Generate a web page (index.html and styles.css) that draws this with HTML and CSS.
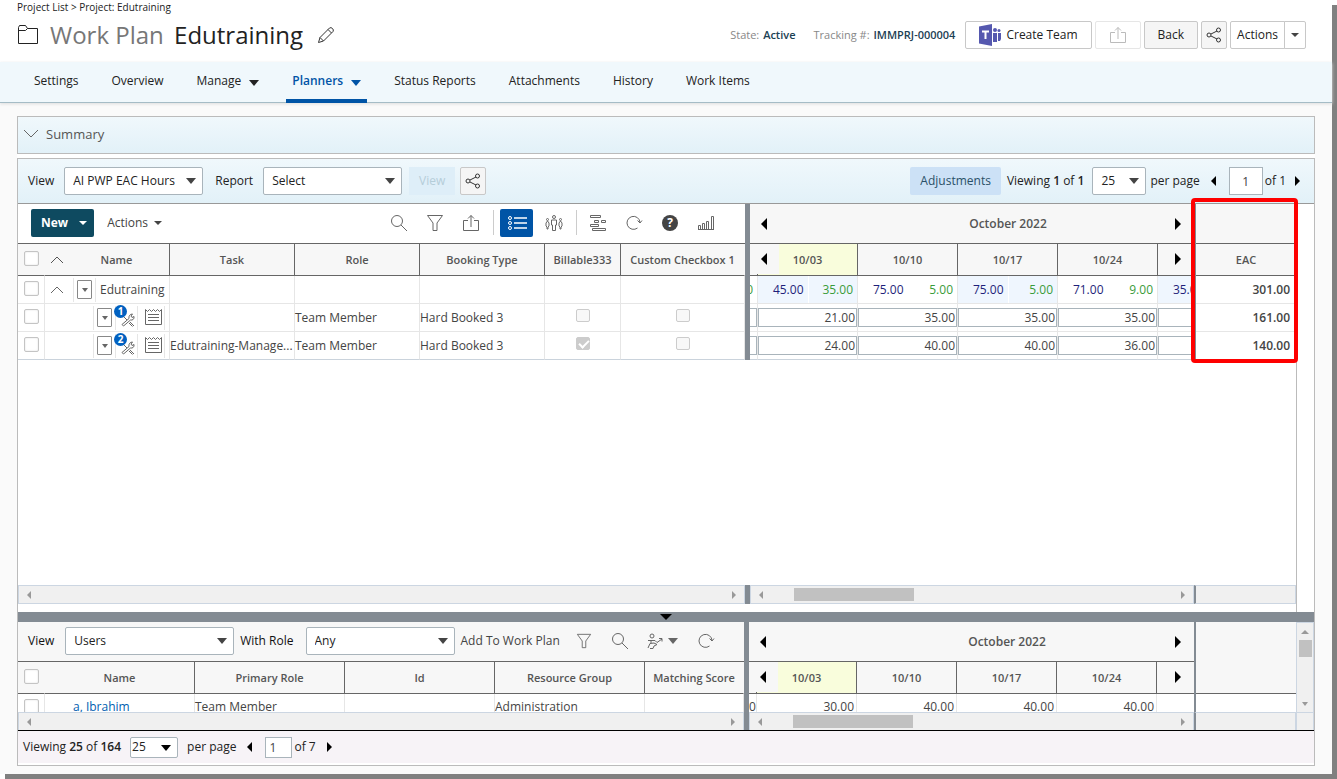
FILE: index.html
```html
<!DOCTYPE html>
<html lang="en">
<head>
  <meta charset="UTF-8">
  <title>Work Plan - Edutraining</title>
  <link rel="stylesheet" href="styles.css">
</head>
<body>
  <!-- shared icons -->
  <svg class="sprite" aria-hidden="true">
    <symbol id="i-share" viewBox="0 0 16 16"><g fill="none" stroke="currentColor"><circle cx="3" cy="8" r="2"/><circle cx="12.500" cy="3" r="2"/><circle cx="12.500" cy="13" r="2"/><path d="M5 7l6-3M5 9l6 3"/></g></symbol>
    <symbol id="i-export" viewBox="0 0 18 18"><path d="M6 6.500H1.500v10h15v-10H12M9 13V1.500M6 4.500l3-3 3 3" fill="none" stroke="currentColor"/></symbol>
    <symbol id="i-search" viewBox="0 0 18 18"><path d="M11 11l6 6M1.500 7a5.500 5.500 0 1 0 11 0a5.500 5.500 0 1 0-11 0z" fill="none" stroke="currentColor"/></symbol>
    <symbol id="i-filter" viewBox="0 0 18 18"><path d="M1.500 1.500h15L11 9v7.500H7V9z" fill="none" stroke="currentColor"/></symbol>
    <symbol id="i-refresh" viewBox="0 0 18 18"><path d="M12.500 14A6.500 6.500 0 1 1 15 8.500M12.500 6.500l2.500 2.500 2-2.500" fill="none" stroke="currentColor"/></symbol>
    <symbol id="i-up" viewBox="0 0 14 8"><path d="M1 7l6-6 6 6" fill="none" stroke="currentColor"/></symbol>
    <symbol id="i-tools" viewBox="0 0 14 14"><g fill="none" stroke="currentColor"><path d="M1 11.500L8 5.500c-.5-2.500 1-4.500 3.500-4.500L10 3l1 1.500 2-1c.5 2.500-1.500 4-3.500 3.500L2.500 13z"/><path d="M2 3l4 4M9 9l4 4M8 10l3.500 3.500"/></g></symbol>
    <symbol id="i-notes" viewBox="0 0 17 17"><path d="M.500 1.500v15h16v-15l-2 2-2-2-2 2-2-2-2 2-2-2-2 2zM3 6.500h11M3 9.500h11M3 12.500h11" fill="none" stroke="currentColor"/></symbol>
  </svg>

  <div class="page">
    <header class="header">
      <div class="breadcrumb"><a href="#">Project List</a> &gt; <a href="#">Project: Edutraining</a></div>
      <div class="title-row">
        <svg class="folder" width="22" height="21" viewBox="0 0 22 21"><path d="M1.500 19.500v-16l1-2h6l2 3h10v15zM1.500 6.500h7l2-2" fill="none" stroke="#222"/></svg>
        <h1><span class="muted">Work Plan</span> Edutraining</h1>
        <button class="plain" aria-label="Edit"><svg width="18" height="18" viewBox="0 0 18 18"><path d="M1.500 16.500l1.500-5L12.500 2q1.500-1 3 .500t.500 3L6.500 15zM3 11.500l3.500 3.500M11 3.500l3.500 3.500" fill="none" stroke="#333"/></svg></button>
        <div class="header-side">
          <span class="fact">State: <b>Active</b></span>
          <span class="fact">Tracking #: <b>IMMPRJ-000004</b></span>
          <button class="btn create-team">
            <svg width="22" height="22" viewBox="0 0 22 22"><path d="M0 2.500L13 0v22L0 19.500z" fill="#5558af"/><path d="M3 6.500h7v2H7.500V15h-2V8.500H3z" fill="#fff"/><circle cx="16" cy="6" r="2" fill="#5558af"/><circle cx="20" cy="6.500" r="1.500" fill="#5558af"/><path d="M14 9h4v9h-4zM19 9h3v6l-1 2h-2z" fill="#5558af"/></svg>
            Create Team
          </button>
          <button class="btn export-btn" disabled aria-label="Export"><svg width="18" height="18"><use href="#i-export"/></svg></button>
          <button class="btn soft">Back</button>
          <button class="btn soft share-btn" aria-label="Share"><svg width="16" height="16"><use href="#i-share"/></svg></button>
          <div class="split-btn">
            <button class="btn">Actions</button><button class="btn" aria-label="More actions"><i class="tri down small"></i></button>
          </div>
        </div>
      </div>
    </header>

    <nav class="tabs">
      <a href="#">Settings</a>
      <a href="#">Overview</a>
      <a href="#">Manage <i class="tri down"></i></a>
      <a href="#" class="active">Planners <i class="tri down"></i></a>
      <a href="#">Status Reports</a>
      <a href="#">Attachments</a>
      <a href="#">History</a>
      <a href="#">Work Items</a>
    </nav>

    <main class="content">
      <button class="summary">
        <svg width="16" height="10" viewBox="0 0 16 10"><path d="M1 1l7 7 7-7" fill="none" stroke="#666"/></svg>
        Summary
      </button>

      <section class="planner">
        <div class="view-bar">
          <label for="view">View</label>
          <span class="select w140"><select id="view"><option>AI PWP EAC Hours</option></select></span>
          <label for="report" class="report-label">Report</label>
          <span class="select w140"><select id="report"><option>Select</option></select></span>
          <button class="view-btn" disabled>View</button>
          <button class="btn soft share-btn" aria-label="Share view"><svg width="16" height="16"><use href="#i-share"/></svg></button>
          <div class="pager">
            <button class="adjust">Adjustments</button>
            <span>Viewing <b>1</b> of <b>1</b></span>
            <span class="select w54"><select aria-label="Rows per page"><option>25</option></select></span>
            <span>per page</span>
            <button class="plain" aria-label="Previous page"><i class="tri left small"></i></button>
            <input class="page-no" value="1" aria-label="Page">
            <span>of 1</span>
            <button class="plain" aria-label="Next page"><i class="tri right small"></i></button>
          </div>
        </div>

        <div class="upper">
          <div class="panes">
            <div class="pane-left">
              <div class="grid-tools">
                <button class="new-btn">New <i class="tri down small"></i></button>
                <button class="plain actions-btn">Actions <i class="tri down small"></i></button>
                <div class="icon-row">
                  <button class="icon-btn" aria-label="Search"><svg width="18" height="18"><use href="#i-search"/></svg></button>
                  <button class="icon-btn" aria-label="Filter"><svg width="18" height="18"><use href="#i-filter"/></svg></button>
                  <button class="icon-btn" aria-label="Export"><svg width="18" height="18"><use href="#i-export"/></svg></button>
                  <span class="sep"></span>
                  <button class="icon-btn on" aria-label="List view"><svg width="20" height="16" viewBox="0 0 20 16" fill="none" stroke="#fff"><circle cx="3" cy="3" r="1.500"/><circle cx="3" cy="8" r="1.500"/><circle cx="3" cy="13" r="1.500"/><path d="M7 3h13M7 8h13M7 13h13" stroke-width="1.500"/></svg></button>
                  <button class="icon-btn" aria-label="People view"><svg width="18" height="18" viewBox="0 0 18 18" fill="none" stroke="currentColor"><circle cx="9" cy="3" r="1.500"/><path d="M6.500 6h5v5h-1v5.500h-3V11h-1zM2.500 7l1.500 2v3l-1 1v2h-1v-2L1 12V9zM15.500 7L17 9v3l-1 1v2h-1v-2l-1-1V9z"/><circle cx="2.500" cy="5.500" r="1"/><circle cx="15.500" cy="5.500" r="1"/></svg></button>
                  <span class="sep"></span>
                  <button class="icon-btn" aria-label="Gantt"><svg width="18" height="18" viewBox="0 0 18 18" fill="none" stroke="currentColor"><path d="M1.500 1.500h10v2h-10zM5.500 6.500h4v2h-4zM12.500 6.500h4v2h-4zM1.500 10.500h8v2h-8zM3.500 14.500h13v2h-13z"/></svg></button>
                  <button class="icon-btn" aria-label="Refresh"><svg width="18" height="18"><use href="#i-refresh"/></svg></button>
                  <button class="icon-btn help" aria-label="Help"><span>?</span></button>
                  <button class="icon-btn" aria-label="Chart"><svg width="18" height="18" viewBox="0 0 18 18" fill="none" stroke="currentColor"><path d="M1.500 11.500h2v4h-2zM5.500 9.500h2v6h-2zM9.500 7.500h2v8h-2zM14.500 2.500h2v13h-2zM1 15.500h16"/></svg></button>
                </div>
              </div>
              <table class="grid plan-grid">
                <colgroup><col class="c-check"><col class="c-name"><col class="c-wide"><col class="c-wide"><col class="c-wide"><col class="c-bill"><col></colgroup>
                <thead>
                  <tr>
                    <th class="no-line"><input type="checkbox" class="pick" aria-label="Select all"></th>
                    <th><div class="name-head"><button class="plain" aria-label="Collapse all"><svg width="14" height="8"><use href="#i-up"/></svg></button><span>Name</span></div></th>
                    <th>Task</th><th>Role</th><th>Booking Type</th><th>Billable333</th><th class="no-line">Custom Checkbox 1</th>
                  </tr>
                </thead>
                <tbody>
                  <tr>
                    <td><input type="checkbox" class="pick" aria-label="Select Edutraining"></td>
                    <td><div class="name-cell">
                      <span class="slot fold"><button class="plain" aria-label="Collapse"><svg width="14" height="8"><use href="#i-up"/></svg></button></span>
                      <span class="slot"><button class="drop" aria-label="Row menu"><i class="tri down tiny"></i></button></span>
                      <span class="label">Edutraining</span>
                    </div></td>
                    <td></td><td></td><td></td><td></td><td></td>
                  </tr>
                  <tr>
                    <td><input type="checkbox" class="pick" aria-label="Select row 1"></td>
                    <td><div class="name-cell">
                      <span class="slot indent"></span>
                      <span class="slot"><button class="drop" aria-label="Row menu"><i class="tri down tiny"></i></button></span>
                      <span class="slot tools"><svg width="14" height="14"><use href="#i-tools"/></svg><b class="badge">1</b></span>
                      <span class="slot notes"><svg width="17" height="17"><use href="#i-notes"/></svg></span>
                    </div></td>
                    <td></td><td>Team Member</td><td>Hard Booked 3</td>
                    <td class="mid"><input type="checkbox" class="flag" disabled aria-label="Billable333"></td>
                    <td class="mid"><input type="checkbox" class="flag" disabled aria-label="Custom Checkbox 1"></td>
                  </tr>
                  <tr>
                    <td><input type="checkbox" class="pick" aria-label="Select row 2"></td>
                    <td><div class="name-cell">
                      <span class="slot indent"></span>
                      <span class="slot"><button class="drop" aria-label="Row menu"><i class="tri down tiny"></i></button></span>
                      <span class="slot tools"><svg width="14" height="14"><use href="#i-tools"/></svg><b class="badge">2</b></span>
                      <span class="slot notes"><svg width="17" height="17"><use href="#i-notes"/></svg></span>
                    </div></td>
                    <td>Edutraining-Manage...</td><td>Team Member</td><td>Hard Booked 3</td>
                    <td class="mid"><input type="checkbox" class="flag" disabled checked aria-label="Billable333"></td>
                    <td class="mid"><input type="checkbox" class="flag" disabled aria-label="Custom Checkbox 1"></td>
                  </tr>
                </tbody>
              </table>
            </div>
            <div class="splitter"></div>
            <div class="pane-time">
              <table class="grid time-grid">
                <colgroup><col class="c-cut"><col><col><col><col><col></colgroup>
                <thead>
                  <tr class="month"><th></th><th colspan="5">October 2022</th></tr>
                  <tr><th></th><th class="current">10/03</th><th>10/10</th><th>10/17</th><th>10/24</th><th></th></tr>
                </thead>
                <tbody>
                  <tr class="sums">
                    <td><div><span class="avail">0</span></div></td>
                    <td class="tint"><div><span>45.00</span><span class="avail">35.00</span></div></td>
                    <td><div><span>75.00</span><span class="avail">5.00</span></div></td>
                    <td class="tint"><div><span>75.00</span><span class="avail">5.00</span></div></td>
                    <td><div><span>71.00</span><span class="avail">9.00</span></div></td>
                    <td class="tint"><div><span>35.00</span><span></span></div></td>
                  </tr>
                  <tr>
                    <td><input class="hours cut" aria-label="Hours"></td>
                    <td><input class="hours" value="21.00" aria-label="10/03"></td>
                    <td><input class="hours" value="35.00" aria-label="10/10"></td>
                    <td><input class="hours" value="35.00" aria-label="10/17"></td>
                    <td><input class="hours" value="35.00" aria-label="10/24"></td>
                    <td><input class="hours" aria-label="Hours"></td>
                  </tr>
                  <tr>
                    <td><input class="hours cut" aria-label="Hours"></td>
                    <td><input class="hours" value="24.00" aria-label="10/03"></td>
                    <td><input class="hours" value="40.00" aria-label="10/10"></td>
                    <td><input class="hours" value="40.00" aria-label="10/17"></td>
                    <td><input class="hours" value="36.00" aria-label="10/24"></td>
                    <td><input class="hours" aria-label="Hours"></td>
                  </tr>
                </tbody>
              </table>
              <div class="time-nav prev">
                <button class="plain" aria-label="Previous month"><i class="tri left"></i></button>
                <button class="plain" aria-label="Previous week"><i class="tri left"></i></button>
              </div>
              <div class="time-nav next">
                <button class="plain" aria-label="Next month"><i class="tri right"></i></button>
                <button class="plain" aria-label="Next week"><i class="tri right"></i></button>
              </div>
            </div>
            <div class="pane-total">
              <table class="grid total-grid">
                <thead>
                  <tr class="month"><th></th></tr>
                  <tr><th>EAC</th></tr>
                </thead>
                <tbody>
                  <tr><td>301.00</td></tr>
                  <tr><td>161.00</td></tr>
                  <tr><td>140.00</td></tr>
                </tbody>
              </table>
              <div class="highlight"></div>
            </div>
          </div>
          <div class="blank"></div>
          <div class="scroll-row">
            <div class="hbar pane-left"><i class="tri left tiny"></i><i class="tri right tiny"></i></div>
            <div class="splitter"></div>
            <div class="hbar pane-time"><i class="tri left tiny"></i><span class="thumb"></span><i class="tri right tiny"></i></div>
            <div class="hbar pane-total"></div>
          </div>
        </div>

        <div class="h-splitter"><i class="tri down"></i></div>

        <div class="lower">
          <div class="lower-main">
            <div class="panes">
              <div class="pane-left">
                <div class="grid-tools users-tools">
                  <label for="users">View</label>
                  <span class="select w169"><select id="users"><option>Users</option></select></span>
                  <label for="role">With Role</label>
                  <span class="select w149"><select id="role"><option>Any</option></select></span>
                  <button class="plain add-btn">Add To Work Plan</button>
                  <button class="icon-btn" aria-label="Filter"><svg width="16" height="16"><use href="#i-filter"/></svg></button>
                  <button class="icon-btn" aria-label="Search"><svg width="18" height="18"><use href="#i-search"/></svg></button>
                  <button class="icon-btn assign" aria-label="Assign"><svg width="16" height="16" viewBox="0 0 16 16" fill="none" stroke="currentColor"><circle cx="5" cy="3" r="2"/><path d="M1 7.500h7l2 2 5-3.500M12 5.500h3v3M1 15l2-4.500L7 10l3 1.500-3 1.500-1 2.500H3M4 7.500V10"/></svg><i class="tri down"></i></button>
                  <button class="icon-btn" aria-label="Refresh"><svg width="18" height="18"><use href="#i-refresh"/></svg></button>
                </div>
                <table class="grid users-grid">
                  <colgroup><col class="c-check"><col class="c-user"><col class="c-user"><col class="c-user"><col class="c-user"><col></colgroup>
                  <thead>
                    <tr><th class="no-line"><input type="checkbox" class="pick" aria-label="Select all users"></th><th>Name</th><th>Primary Role</th><th>Id</th><th>Resource Group</th><th class="no-line">Matching Score</th></tr>
                  </thead>
                  <tbody>
                    <tr><td><input type="checkbox" class="pick" aria-label="Select a, Ibrahim"></td><td class="user"><a href="#">a, Ibrahim</a></td><td>Team Member</td><td></td><td>Administration</td><td></td></tr>
                  </tbody>
                </table>
              </div>
              <div class="splitter"></div>
              <div class="pane-time">
                <table class="grid time-grid">
                  <colgroup><col class="c-cut"><col><col><col><col><col></colgroup>
                  <thead>
                    <tr class="month"><th></th><th colspan="5">October 2022</th></tr>
                    <tr><th></th><th class="current">10/03</th><th>10/10</th><th>10/17</th><th>10/24</th><th></th></tr>
                  </thead>
                  <tbody>
                    <tr class="free"><td>0</td><td>30.00</td><td>40.00</td><td>40.00</td><td>40.00</td><td></td></tr>
                  </tbody>
                </table>
                <div class="time-nav prev">
                  <button class="plain" aria-label="Previous month"><i class="tri left"></i></button>
                  <button class="plain" aria-label="Previous week"><i class="tri left"></i></button>
                </div>
                <div class="time-nav next">
                  <button class="plain" aria-label="Next month"><i class="tri right"></i></button>
                  <button class="plain" aria-label="Next week"><i class="tri right"></i></button>
                </div>
              </div>
              <div class="pane-total"><div class="total-head"></div></div>
            </div>
            <div class="scroll-row">
              <div class="hbar pane-left"><i class="tri left tiny"></i><i class="tri right tiny"></i></div>
              <div class="splitter"></div>
              <div class="hbar pane-time"><i class="tri left tiny"></i><span class="thumb"></span><i class="tri right tiny"></i></div>
              <div class="hbar pane-total"></div>
            </div>
          </div>
          <div class="vbar"><div class="track"><i class="tri up tiny"></i><span class="thumb"></span><i class="tri down tiny"></i></div></div>
        </div>

        <footer class="footer">
          <span>Viewing <b>25</b> of <b>164</b></span>
          <span class="select w48"><select aria-label="Users per page"><option>25</option></select></span>
          <span>per page</span>
          <button class="plain" aria-label="Previous page"><i class="tri left small"></i></button>
          <input class="page-no" value="1" aria-label="Page">
          <span>of 7</span>
          <button class="plain" aria-label="Next page"><i class="tri right small"></i></button>
        </footer>
      </section>
    </main>
  </div>
</body>
</html>
```

FILE: styles.css
```css
* {
  box-sizing: border-box;
}

body {
  margin: 0;
  background: #fff;
  font-family: "Open Sans", sans-serif;
  font-size: 12px;
  line-height: 16px;
  color: #222;
}

button,
input,
select {
  font: inherit;
  color: inherit;
  margin: 0;
}

button {
  white-space: nowrap;
}

a {
  color: inherit;
  text-decoration: none;
}

svg {
  display: block;
  flex: none;
}

b {
  font-weight: 600;
}

.sprite {
  position: absolute;
  width: 0;
  height: 0;
}

.page {
  display: flex;
  flex-direction: column;
  min-height: calc(100vh - 5px);
  margin: 0 5px 5px 0;
  background: #fafafa;
  box-shadow: 5px 5px 0 #808080;
}

.plain {
  display: inline-flex;
  align-items: center;
  padding: 0;
  border: none;
  background: none;
}

/* triangles */
.tri {
  display: inline-block;
  flex: none;
  width: 0;
  height: 0;
  border: 5px solid transparent;
}

.tri.down { border-top: 6px solid; border-bottom: 0; }
.tri.up { border-bottom: 6px solid; border-top: 0; }
.tri.left { border-width: 6px; border-right-color: currentColor; border-left: 0; }
.tri.right { border-width: 6px; border-left-color: currentColor; border-right: 0; }
.tri.down.small { border-width: 4px; border-bottom: 0; }
.tri.left.small,
.tri.right.small { border-width: 5px; }
.tri.left.small { border-left: 0; }
.tri.right.small { border-right: 0; }
.tri.tiny { border-width: 4px; }
.tri.down.tiny { border-width: 4px 3px 0; }
.tri.up.tiny { border-width: 0 4px 4px; }
.tri.left.tiny { border-left: 0; }
.tri.right.tiny { border-right: 0; }

/* header */
.header {
  height: 62px;
  background: #fff;
  padding: 0 26px 0 17px;
}

.breadcrumb {
  height: 15px;
  font-size: 10px;
  line-height: 15px;
}

.title-row {
  display: flex;
  align-items: center;
  height: 39px;
}

h1 {
  margin: 0 14px 0 11px;
  font-size: 24px;
  font-weight: 400;
  line-height: 32px;
  white-space: nowrap;
}

h1 .muted {
  margin-right: 4px;
  color: #777;
}

.header-side {
  display: flex;
  align-items: center;
  gap: 3px;
  margin-left: auto;
}

.fact {
  margin-right: 15px;
  font-size: 11px;
  color: #888;
}

.fact b {
  margin-left: 1px;
  color: #1c4154;
}

.fact + .btn {
  margin-left: -8px;
}

.btn {
  display: flex;
  align-items: center;
  justify-content: center;
  height: 28px;
  padding: 0 13px;
  border: 1px solid #c8c8c8;
  border-radius: 2px;
  background: #fff;
}

.btn.soft {
  background: #f5f5f5;
}

.create-team {
  gap: 5px;
}

.export-btn {
  border-color: #e6e6e6;
  color: #bbb;
}

.share-btn {
  width: 26px;
  padding: 0;
  color: #333;
}

.split-btn {
  display: flex;
}

.split-btn .btn {
  padding: 0 6px;
  border-radius: 2px 0 0 2px;
}

.split-btn .btn + .btn {
  margin-left: -1px;
  border-radius: 0 2px 2px 0;
}

.split-btn .tri {
  color: #444;
}

/* tabs */
.tabs {
  display: flex;
  gap: 21px;
  height: 41px;
  padding-left: 28px;
  background: #f0f8fc;
  border-bottom: 1px solid #a5bcc6;
  box-shadow: 0 1px 3px #ddd;
}

.tabs a {
  display: flex;
  align-items: center;
  gap: 8px;
  height: 41px;
  padding: 0 6px 3px;
}

.tabs .tri {
  margin-top: 4px;
}

.tabs .active {
  padding-bottom: 0;
  border-top: 1px solid transparent;
  border-bottom: 4px solid #0054a6;
  font-weight: 600;
  color: #0054a6;
}

/* content */
.content {
  flex: 1;
  display: flex;
  flex-direction: column;
  padding: 13px 17px 8px;
}

.summary {
  display: flex;
  align-items: center;
  gap: 7px;
  height: 38px;
  padding: 0 5px 2px;
  border: 1px solid #bbb;
  background: linear-gradient(#f0f8fc, #e2f1f8);
  font-size: 13px;
  color: #555;
}

.planner {
  flex: 1;
  display: flex;
  flex-direction: column;
  margin-top: 4px;
  border: 1px solid #bbb;
  background: #fff;
  box-shadow: 0 -4px 0 #fff;
}

.view-bar {
  display: flex;
  align-items: center;
  height: 45px;
  padding: 0 14px 0 10px;
  border-bottom: 1px solid #999;
  background: linear-gradient(#f0f8fc, #e2f1f8);
}

.view-bar > .select {
  margin-left: 10px;
}

.report-label {
  margin-left: 12px;
}

.select {
  position: relative;
  flex: none;
  display: inline-flex;
}

.select::after {
  content: "";
  position: absolute;
  right: 7px;
  top: 11px;
  border: 5px solid transparent;
  border-top: 6px solid #444;
  border-bottom: 0;
  pointer-events: none;
}

.select select {
  appearance: none;
  width: 100%;
  height: 28px;
  padding: 0 8px;
  border: 1px solid #a9b4bb;
  border-radius: 2px;
  background: #fff;
  color: #222;
}

.w140 { width: 139px; }
.w54 { width: 54px; }
.w169 { width: 169px; }
.w149 { width: 149px; }
.w48 { width: 48px; }

.view-btn {
  width: 46px;
  height: 28px;
  margin: 0 5px 0 7px;
  padding: 0;
  border: none;
  background: #deeef8;
  color: #b5cdd9;
}

.pager {
  display: flex;
  align-items: center;
  margin-left: auto;
}

.adjust {
  height: 28px;
  margin-right: 6px;
  padding: 0 10px;
  border: none;
  border-radius: 2px;
  background: #cce1f6;
  color: #2a5068;
}

.pager .select {
  margin: 0 4px 0 8px;
}

.page-no {
  width: 34px;
  height: 28px;
  padding: 0;
  border: 1px solid #a9b4bb;
  text-align: center;
  color: #444;
}

.pager .plain,
.footer .plain {
  margin: 0 11px;
  color: #000;
}

.pager .page-no,
.footer .page-no {
  margin-left: 2px;
  margin-right: 2px;
}

.pager .plain:last-child {
  margin: 0 0 0 9px;
}

/* upper grid */
.upper {
  flex: 1;
  display: flex;
  flex-direction: column;
  margin-right: 17px;
  padding-bottom: 8px;
  border-right: 1px solid #bbb;
}

.blank {
  flex: 1;
}

.panes,
.scroll-row {
  display: flex;
}

.pane-left {
  flex: 0 0 727px;
  min-width: 0;
}

.splitter {
  flex: 0 0 5px;
  background: #838b93;
}

.pane-time {
  position: relative;
  flex: 1;
  min-width: 0;
  overflow: hidden;
}

.pane-total {
  position: relative;
  flex: 0 0 102px;
  border-left: 2px solid #838b93;
}

.grid-tools {
  display: flex;
  align-items: center;
  height: 40px;
  padding: 0 0 2px 13px;
  border-bottom: 1px solid #666;
  color: #444;
}

.new-btn {
  display: flex;
  align-items: center;
  gap: 11px;
  height: 28px;
  padding: 0 7px 0 10px;
  border: none;
  border-radius: 2px;
  background: #0e4a60;
  color: #fff;
  font-weight: 700;
}

.actions-btn {
  gap: 6px;
  margin-left: 13px;
}

.icon-row {
  display: flex;
  align-items: center;
  margin: 0 21px 0 auto;
}

.icon-btn {
  display: flex;
  align-items: center;
  justify-content: center;
  width: 36px;
  height: 28px;
  padding: 0;
  border: none;
  background: none;
  color: #666;
}

.icon-btn.on {
  width: 33px;
  margin: 0 3px 0 2px;
  border-radius: 2px;
  background: #0054a6;
}

.sep {
  width: 1px;
  height: 25px;
  margin: 0 4px;
  background: #ccc;
}

.sep + .icon-btn:not(.on) {
  margin-left: -1px;
}

.help span {
  width: 16px;
  height: 16px;
  border-radius: 50%;
  background: #444;
  color: #fff;
  font-weight: 700;
}

.grid {
  width: 100%;
  table-layout: fixed;
  border-collapse: separate;
  border-spacing: 0;
  color: #444;
}

.grid th {
  height: 32px;
  padding: 0;
  border-right: 1px solid #666;
  border-bottom: 1px solid #666;
  background: #f7f7f7;
  font-size: 11px;
  font-weight: 600;
  color: #555;
}

.grid th.no-line {
  border-right-color: transparent;
  background-clip: border-box;
}

.grid td {
  height: 28px;
  padding: 0;
  border-right: 1px solid #e6e6e6;
  border-bottom: 1px solid #e6e6e6;
  white-space: nowrap;
}

.upper .grid tbody tr:last-child td {
  border-bottom-color: #cad3dc;
}

.c-check { width: 27px; }
.c-name { width: 125px; }
.c-wide { width: 125px; }
.c-bill { width: 76px; }
.c-user { width: 150px; }
.c-cut { width: 8px; }

.pick {
  appearance: none;
  display: block;
  width: 15px;
  height: 15px;
  margin: 0 0 3px 6px;
  border: 1px solid #c4c4c4;
  border-radius: 2px;
  background: #fff;
  box-shadow: inset 0 0 2px #ddd;
}

.flag {
  appearance: none;
  display: block;
  position: relative;
  width: 14px;
  height: 13px;
  margin: 0 auto 4px;
  border: 1px solid #ccc;
  border-radius: 2px;
  background: #f8f8f8;
}

.flag:checked {
  background: #ccc;
}

.flag:checked::after {
  content: "";
  position: absolute;
  left: 4px;
  top: 0;
  width: 4px;
  height: 8px;
  border: solid #fff;
  border-width: 0 2px 2px 0;
  transform: rotate(45deg);
}

.name-head {
  display: flex;
  align-items: center;
  padding-left: 5px;
}

.name-head span {
  flex: 1;
}

.name-cell {
  display: flex;
  align-items: center;
}

.slot {
  position: relative;
  display: flex;
  align-items: center;
  justify-content: center;
  width: 22px;
  height: 24px;
  border-right: 1px solid #e6e6e6;
  color: #666;
}

.slot.fold {
  width: 29px;
  justify-content: flex-start;
  padding-left: 5px;
}

.slot.indent {
  width: 49px;
}

.slot.tools {
  justify-content: flex-end;
  padding: 4px 2px 0 0;
}

.slot.notes {
  width: 27px;
  padding: 0 0 2px 4px;
}

.name-cell .label {
  padding-left: 4px;
}

.drop {
  display: flex;
  align-items: center;
  justify-content: center;
  width: 15px;
  height: 19px;
  padding: 0;
  border: 1px solid #888;
  border-radius: 1px;
  background: #fff;
}

.badge {
  position: absolute;
  left: -2px;
  top: -1px;
  width: 13px;
  height: 13px;
  border-radius: 50%;
  background: #0060c0;
  color: #fff;
  font-size: 10px;
  line-height: 13px;
  text-align: center;
  font-weight: 700;
}

/* time grid */
.time-grid {
  width: 508px;
}

.grid .month th {
  height: 40px;
  border-right: none;
  font-size: 12px;
}

.time-grid .current {
  background: #f9fddc;
}

.time-nav {
  position: absolute;
  top: 0;
  display: flex;
  flex-direction: column;
  gap: 1px;
  padding-bottom: 2px;
}

.time-nav .plain {
  height: 39px;
  width: 29px;
  justify-content: center;
  background: #f7f7f7;
  color: #000;
}

.time-nav .plain + .plain {
  height: 30px;
}

.time-nav.prev { left: 0; }
.time-nav.prev .plain { padding-right: 2px; }
.time-nav.next { right: 1px; }
.time-nav.next .plain { padding-right: 1px; }

.sums div {
  display: flex;
  height: 27px;
  justify-content: flex-end;
}

.sums span {
  flex: 0 1 50px;
  padding-right: 4px;
  line-height: 27px;
  text-align: right;
  color: #1f1f7a;
}

.sums .tint {
  background: #eff6fe;
}

.sums .tint span + span {
  border-left: 1px solid #fff;
}

.sums .avail {
  color: #3a9c3a;
}

.hours {
  display: block;
  width: 100%;
  height: 19px;
  padding: 0 1px;
  border: 1px solid #a9b4bb;
  text-align: right;
  color: #444;
}

.hours.cut {
  border-left: none;
}

.free td {
  padding-right: 2px;
  text-align: right;
}

.total-grid th,
.total-grid td {
  border-right: none !important;
}

.total-grid td {
  padding-right: 6px;
  text-align: right;
  font-weight: 600;
}

.highlight {
  position: absolute;
  inset: -6px -2px -3px -5px;
  border: 4px solid #fe0000;
  border-radius: 4px;
  pointer-events: none;
}

/* scrollbars */
.hbar {
  display: flex;
  align-items: center;
  height: 19px;
  padding: 0 8px;
  border: 1px solid #ccd6e2;
  background: #f0f0f0;
  color: #999;
}

.hbar.pane-total {
  border-left: 2px solid #838b93;
}

.hbar .right {
  margin-left: auto;
}

.hbar .thumb {
  width: 120px;
  height: 13px;
  margin-left: 31px;
  background: #c1c1c1;
}

.h-splitter {
  height: 10px;
  padding: 2px 0 0 642px;
  background: #838b93;
  color: #000;
  line-height: 6px;
}

.h-splitter .tri {
  display: block;
  border-width: 6px 6px 0;
}

/* lower grid */
.lower {
  display: flex;
  border-bottom: 1px solid #000;
}

.lower-main {
  flex: 1;
  min-width: 0;
}

.lower .pane-left {
  flex-basis: 726px;
}

.lower .panes {
  height: 90px;
  overflow: hidden;
}

.lower .scroll-row .hbar {
  height: 18px;
  border-bottom: none;
}

.lower tbody td {
  height: 26px;
}

.lower tbody .pick {
  margin-bottom: 0;
}

.users-tools {
  padding-left: 10px;
  background: #f7f7f7;
  color: #222;
}

.users-tools .select {
  margin: 0 6px 0 11px;
}

.users-tools label {
  color: #111;
  font-weight: 500;
}

.users-tools label + .select + label + .select {
  margin-left: 12px;
}

.add-btn {
  margin-right: 6px;
  color: #444;
}

.users-tools .assign {
  gap: 5px;
  width: 50px;
}

.user {
  padding-left: 28px !important;
}

.user a {
  color: #0060b0;
}

.lower .total-head {
  height: 72px;
  border-bottom: 1px solid #666;
  background: #f7f7f7;
}

.vbar {
  width: 18px;
  border: 1px solid #ccd6e2;
  border-bottom: none;
  background: #f0f0f0;
}

.vbar .track {
  display: flex;
  flex-direction: column;
  align-items: center;
  height: 90px;
  padding: 7px 0 6px;
  border-bottom: 1px solid #ccd6e2;
  color: #999;
}

.vbar .thumb {
  width: 13px;
  height: 17px;
  margin-top: 6px;
  background: #c1c1c1;
}

.vbar .down {
  margin-top: auto;
  border-width: 4px 4px 0;
}

.footer {
  display: flex;
  align-items: center;
  height: 34px;
  padding-left: 5px;
  border-bottom: 2px solid #fff;
  background: #f7f3f7;
}

.footer .select {
  margin: 0 9px;
}

.footer .select::after {
  top: 8px;
  border-top-color: #000;
}

.footer .select select {
  height: 21px;
  padding: 0 1px;
}

.footer .page-no {
  width: 27px;
  height: 21px;
  padding-left: 3px;
  text-align: left;
}
```
